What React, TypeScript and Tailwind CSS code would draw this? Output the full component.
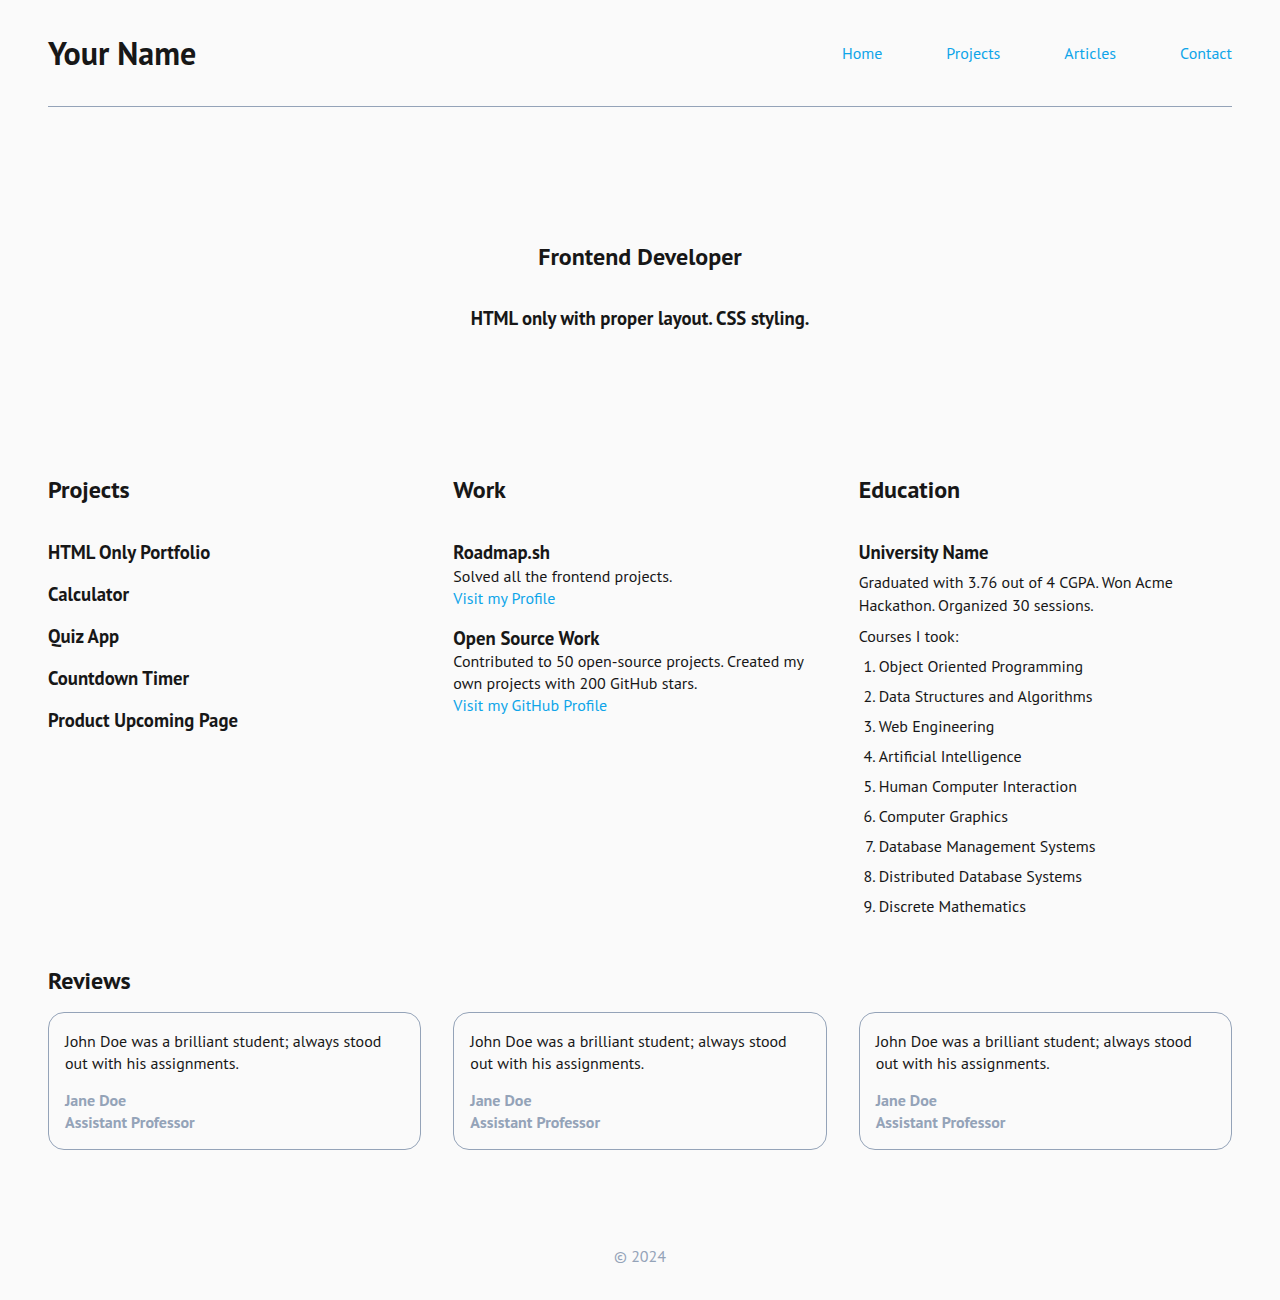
import React from "react";

const font = { fontFamily: '"PT Sans", Lato, "Liberation Sans", sans-serif' };

const projects = ["HTML Only Portfolio", "Calculator", "Quiz App", "Countdown Timer", "Product Upcoming Page"];
const courses = [
  "Object Oriented Programming",
  "Data Structures and Algorithms",
  "Web Engineering",
  "Artificial Intelligence",
  "Human Computer Interaction",
  "Computer Graphics",
  "Database Management Systems",
  "Distributed Database Systems",
  "Discrete Mathematics",
];

function Review() {
  return (
    <div className="rounded-2xl border border-[#94a3b8] px-4 pt-[17px] pb-[16px]">
      <p className="text-[16px] leading-[22px] text-[#171717]">
        John Doe was a brilliant student; always stood out with his assignments.
      </p>
      <div className="mt-[15px] text-[16px] font-bold leading-[22px] text-[#94a3b8]">
        <div>Jane Doe</div>
        <div>Assistant Professor</div>
      </div>
    </div>
  );
}

export default function App() {
  return (
    <div className="min-h-[1300px] bg-[#fafafa] text-[#171717]" style={font}>
      <div className="mx-auto max-w-[1280px] px-12">
        <header className="flex items-center justify-between border-b border-[#94a3b8] pt-8 pb-8">
          <h1 className="text-[32px] font-bold leading-[42px]">Your Name</h1>
          <nav className="flex gap-16 text-[16px] leading-[22px] text-[#0ea5e9]">
            <a>Home</a>
            <a>Projects</a>
            <a>Articles</a>
            <a>Contact</a>
          </nav>
        </header>

        <section className="flex flex-col items-center pt-[134px]">
          <h2 className="text-[24px] font-bold leading-[32px]">Frontend Developer</h2>
          <p className="mt-[33px] text-[18.72px] font-bold leading-[24px]">HTML only with proper layout. CSS styling.</p>
        </section>

        <section className="mt-[144px] grid grid-cols-3 gap-8">
          <div>
            <h2 className="text-[24px] font-bold leading-[32px]">Projects</h2>
            <ul className="mt-[34px] flex flex-col gap-[18px]">
              {projects.map((p) => (
                <li key={p} className="text-[18.72px] font-bold leading-[24px]">{p}</li>
              ))}
            </ul>
          </div>
          <div>
            <h2 className="text-[24px] font-bold leading-[32px]">Work</h2>
            <div className="mt-[34px]">
              <h3 className="text-[18.72px] font-bold leading-[24px]">Roadmap.sh</h3>
              <p className="mt-[1px] text-[16px] leading-[22px]">Solved all the frontend projects.</p>
              <a className="block text-[16px] leading-[22px] text-[#0ea5e9]">Visit my Profile</a>
            </div>
            <div className="mt-[17px]">
              <h3 className="text-[18.72px] font-bold leading-[24px]">Open Source Work</h3>
              <p className="text-[16px] leading-[22px]">
                Contributed to 50 open-source projects. Created my own projects with 200 GitHub stars.
              </p>
              <a className="block text-[16px] leading-[22px] text-[#0ea5e9]">Visit my GitHub Profile</a>
            </div>
          </div>
          <div>
            <h2 className="text-[24px] font-bold leading-[32px]">Education</h2>
            <h3 className="mt-[34px] text-[18.72px] font-bold leading-[24px]">University Name</h3>
            <p className="mt-[7px] text-[16px] leading-[23px]">
              Graduated with 3.76 out of 4 CGPA. Won Acme Hackathon. Organized 30 sessions.
            </p>
            <p className="mt-[8px] text-[16px] leading-[22px]">Courses I took:</p>
            <ol className="mt-[8px] flex list-decimal flex-col gap-[8px] pl-5 text-[16px] leading-[22px]">
              {courses.map((c) => (
                <li key={c}>{c}</li>
              ))}
            </ol>
          </div>
        </section>

        <section className="mt-[48px]">
          <h2 className="text-[24px] font-bold leading-[32px]">Reviews</h2>
          <div className="mt-[15px] grid grid-cols-3 gap-8">
            <Review />
            <Review />
            <Review />
          </div>
        </section>

        <footer className="pt-[95px] pb-[32px] text-center text-[16px] leading-[22px] text-[#94a3b8]">© 2024</footer>
      </div>
    </div>
  );
}
